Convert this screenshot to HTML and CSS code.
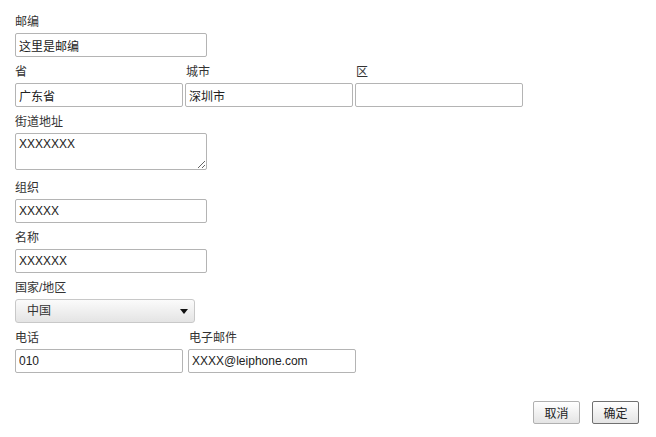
FILE: index.html
```html
<!DOCTYPE html>
<html lang="zh">
<head>
<meta charset="utf-8">
<title>地址</title>
<link rel="stylesheet" href="styles.css">
</head>
<body>
<form class="form">
  <div class="group">
    <label class="label">邮编</label>
    <input class="field w192" type="text" value="这里是邮编">
  </div>
  <div class="group">
    <div class="row tight">
      <div class="col">
        <label class="label">省</label>
        <input class="field w168" type="text" value="广东省">
      </div>
      <div class="col">
        <label class="label">城市</label>
        <input class="field w168" type="text" value="深圳市">
      </div>
      <div class="col">
        <label class="label">区</label>
        <input class="field w168" type="text" value="">
      </div>
    </div>
  </div>
  <div class="group after-area">
    <label class="label">街道地址</label>
    <textarea class="field area w192">XXXXXXX</textarea>
  </div>
  <div class="group">
    <label class="label">组织</label>
    <input class="field w192" type="text" value="XXXXX">
  </div>
  <div class="group">
    <label class="label">名称</label>
    <input class="field w192" type="text" value="XXXXXX">
  </div>
  <div class="group">
    <label class="label">国家/地区</label>
    <div class="select-wrap">
      <select class="select"><option>中国</option></select>
    </div>
  </div>
  <div class="group">
    <div class="row wide">
      <div class="col">
        <label class="label">电话</label>
        <input class="field w168" type="text" value="010">
      </div>
      <div class="col">
        <label class="label">电子邮件</label>
        <input class="field w168" type="text" value="XXXX@leiphone.com">
      </div>
    </div>
  </div>
  <div class="actions">
    <button class="btn" type="button">取消</button>
    <button class="btn primary" type="button">确定</button>
  </div>
</form>
</body>
</html>
```
FILE: styles.css
```css
html, body {
  margin: 0;
  padding: 0;
  background: #ffffff;
}
body {
  font-family: "Liberation Sans", "Noto Sans CJK SC", sans-serif;
  font-size: 12px;
  color: #333333;
}
.form {
  display: flex;
  flex-direction: column;
  padding: 14px 17px 0 15px;
}
.group {
  display: flex;
  flex-direction: column;
  margin-bottom: 7px;
}
.group.after-area {
  margin-bottom: 10px;
}
.label {
  display: block;
  height: 16px;
  line-height: 16px;
  margin-bottom: 3px;
  color: #333333;
}
.row {
  display: flex;
}
.row.tight { gap: 2px; }
.row.wide { gap: 5px; }
.col {
  display: flex;
  flex-direction: column;
}
.row .col + .col .label { padding-left: 1px; }
.field {
  box-sizing: border-box;
  height: 24px;
  margin: 0;
  padding: 0 3px;
  border: 1px solid #b4b4b4;
  border-radius: 2px;
  font-family: "Liberation Sans", "Noto Sans CJK SC", sans-serif;
  font-size: 12px;
  color: #222222;
  background: #ffffff;
  outline: none;
}
.w192 { width: 192px; }
.w168 { width: 168px; }
.area {
  display: block;
  height: 37px;
  padding: 3px 3px;
  line-height: 15px;
  resize: vertical;
}
.select-wrap {
  position: relative;
  width: 180px;
  height: 24px;
}
.select-wrap::after {
  content: "";
  position: absolute;
  right: 7px;
  top: 10px;
  border-left: 4px solid transparent;
  border-right: 4px solid transparent;
  border-top: 5px solid #111111;
  pointer-events: none;
}
.select {
  -webkit-appearance: none;
  appearance: none;
  box-sizing: border-box;
  width: 180px;
  height: 24px;
  margin: 0;
  padding: 0 0 0 11px;
  border: 1px solid #c8c8c8;
  border-radius: 3px;
  background: linear-gradient(#fbfbfb, #e4e4e4);
  font-family: "Liberation Sans", "Noto Sans CJK SC", sans-serif;
  font-size: 12px;
  color: #333333;
  outline: none;
}
.actions {
  display: flex;
  justify-content: flex-end;
  gap: 12px;
  margin-top: 21px;
}
.btn {
  box-sizing: border-box;
  width: 47px;
  height: 23px;
  margin: 0;
  padding: 0;
  border: 1px solid #b0b0b0;
  border-radius: 2px;
  background: linear-gradient(#ffffff, #e4e4e4);
  font-family: "Liberation Sans", "Noto Sans CJK SC", sans-serif;
  font-size: 12px;
  color: #222222;
}
.btn.primary {
  border-color: #707070;
}
```
